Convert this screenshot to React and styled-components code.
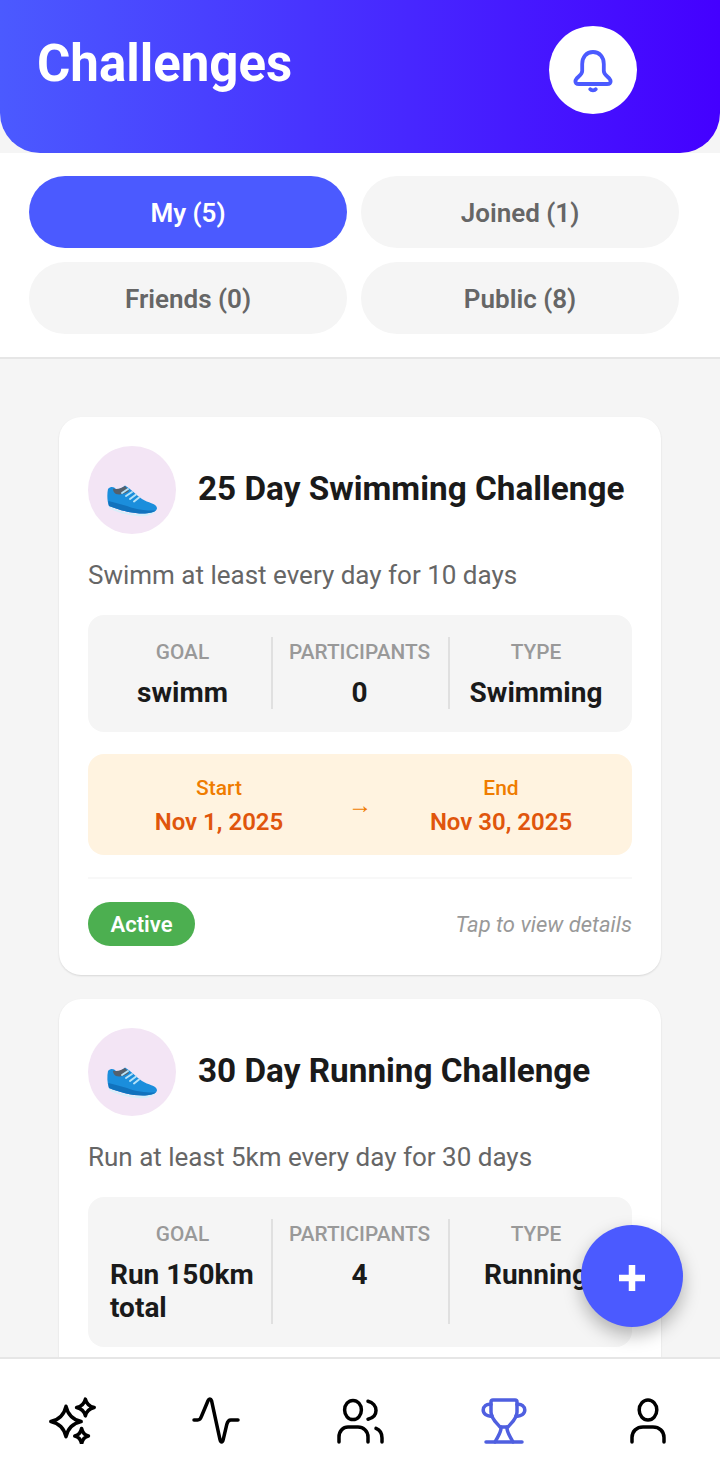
import React from 'react'
import styled, { createGlobalStyle } from 'styled-components'

const primary = '#4b5aff'

const GlobalStyle = createGlobalStyle`
    html, body {
        margin: 0;
        padding: 0;
        background: #f5f5f5;
    }
    * {
        box-sizing: border-box;
    }
    body {
        font-family: Roboto, "Liberation Sans", sans-serif;
    }
`

const Screen = styled.div`
    position: relative;
    width: 720px;
    height: 1463px;
    display: flex;
    flex-direction: column;
    overflow: hidden;
    background: #f5f5f5;
`

const Header = styled.header`
    flex: none;
    height: 153px;
    padding: 26px 83px 0 37px;
    display: flex;
    justify-content: space-between;
    align-items: flex-start;
    background: linear-gradient(90deg, #4b5aff 0%, #4400ff 100%);
    border-radius: 0 0 40px 40px;
`

const Title = styled.h1`
    margin: 9px 0 0;
    font-size: 51px;
    line-height: 58px;
    font-weight: 700;
    color: #fff;
`

const BellButton = styled.button`
    width: 88px;
    height: 88px;
    padding: 0;
    border: none;
    border-radius: 50%;
    background: #fff;
    display: flex;
    align-items: center;
    justify-content: center;
`

const Tabs = styled.div`
    flex: none;
    display: grid;
    grid-template-columns: 318px 318px;
    gap: 14px;
    padding: 23px 41px 23px 29px;
    background: #fff;
    border-bottom: 2px solid #e6e6e6;
`

const Tab = styled.button`
    height: 72px;
    padding: 2px 0 0;
    border: none;
    border-radius: 36px;
    font-family: inherit;
    font-size: 26px;
    font-weight: 600;
    background: ${p => (p.$active ? primary : '#f5f5f5')};
    color: ${p => (p.$active ? '#fff' : '#666')};
`

const List = styled.main`
    flex: 1;
    min-height: 0;
    overflow: hidden;
    padding: 58px 59px 0;
    display: flex;
    flex-direction: column;
    gap: 24px;
`

const Card = styled.article`
    flex: none;
    padding: 29px;
    background: #fff;
    border-radius: 22px;
    box-shadow: 0 1px 2px rgba(0, 0, 0, 0.12);
`

const CardHead = styled.div`
    display: flex;
    align-items: center;
    gap: 22px;
    margin-bottom: 23px;
`

const Avatar = styled.div`
    flex: none;
    width: 88px;
    height: 88px;
    border-radius: 50%;
    background: #f3e5f5;
    display: flex;
    align-items: center;
    justify-content: center;
`

const CardTitle = styled.h2`
    margin: 0 0 2px;
    font-size: 33.3px;
    line-height: 40px;
    font-weight: 700;
    color: #1a1a1a;
    white-space: nowrap;
`

const Description = styled.p`
    margin: 0 0 22px;
    font-size: 26px;
    line-height: 36px;
    color: #666;
`

const Stats = styled.div`
    display: grid;
    grid-template-columns: 185px 177px 182px;
    padding: 22px 0 23px;
    background: #f5f5f5;
    border-radius: 16px;
    margin-bottom: 22px;
`

const Stat = styled.div`
    display: flex;
    flex-direction: column;
    align-items: center;
    padding: 0 16px 0 22px;
    border-right: 2px solid #e0e0e0;

    &:nth-child(2) {
        padding: 0 2px 0 0;
    }

    &:last-child {
        padding: 0 18px 0 8px;
        border-right: none;
    }
`

const StatLabel = styled.span`
    font-size: 20.8px;
    line-height: 30px;
    font-weight: 500;
    color: #999;
    white-space: nowrap;
    margin-bottom: 9px;
`

const StatValue = styled.span`
    font-size: 28px;
    line-height: 33px;
    font-weight: 700;
    color: #1a1a1a;
`

const Dates = styled.div`
    display: flex;
    align-items: center;
    height: 101px;
    padding: 0 22px;
    background: #fff3e0;
    border-radius: 16px;
    margin-bottom: 22px;
`

const DateCol = styled.div`
    flex: 1;
    display: flex;
    flex-direction: column;
    align-items: center;
`

const DateLabel = styled.span`
    margin-top: 2px;
    font-size: 21px;
    line-height: 28px;
    font-weight: 500;
    color: #ef7c00;
`

const DateValue = styled.span`
    margin-top: 5px;
    font-size: 24px;
    line-height: 30px;
    font-weight: 600;
    color: #e0550c;
`

const Arrow = styled.span`
    flex: none;
    width: 64px;
    text-align: center;
    font-size: 24px;
    line-height: 28px;
    color: #ef7c00;
`

const CardFoot = styled.div`
    display: flex;
    align-items: center;
    justify-content: space-between;
    padding-top: 23px;
    border-top: 2px solid #f8f8f8;
`

const Badge = styled.span`
    width: 107px;
    height: 44px;
    border-radius: 22px;
    background: #4caf50;
    color: #fff;
    font-size: 22px;
    font-weight: 600;
    display: flex;
    align-items: center;
    justify-content: center;
`

const Hint = styled.span`
    font-size: 22px;
    font-style: italic;
    color: #999;
`

const Fab = styled.button`
    position: absolute;
    left: 581px;
    top: 1225px;
    width: 102px;
    height: 102px;
    padding: 4px 0 0;
    border: none;
    border-radius: 50%;
    background: ${primary};
    box-shadow: 0 8px 18px rgba(0, 0, 0, 0.28);
    display: flex;
    align-items: center;
    justify-content: center;
`

const Nav = styled.nav`
    position: relative;
    flex: none;
    height: 106px;
    display: grid;
    grid-template-columns: repeat(5, 1fr);
    align-items: start;
    padding-top: 37px;
    background: #fff;
    border-top: 2px solid #e6e6e6;
`

const NavItem = styled.div`
    display: flex;
    justify-content: center;
    color: ${p => (p.$active ? '#4f5fe0' : '#000')};
`

const Shoe = styled.svg`
    margin-top: 22px;
`

const star = (cx, cy, rx, ry) => {
    const k = 0.18
    return `M${cx} ${cy - ry}Q${cx + rx * k} ${cy - ry * k} ${cx + rx} ${cy}Q${cx + rx * k} ${cy + ry * k} ${cx} ${cy + ry}Q${cx - rx * k} ${cy + ry * k} ${cx - rx} ${cy}Q${cx - rx * k} ${cy - ry * k} ${cx} ${cy - ry}Z`
}

const Icon = ({ children }) => (
    <svg width="48" height="48" viewBox="0 0 24 24" fill="none" stroke="currentColor" strokeWidth="1.75" strokeLinecap="round" strokeLinejoin="round">
        {children}
    </svg>
)

const BellIcon = () => (
    <svg width="48" height="48" viewBox="0 0 24 24" fill="none" stroke={primary} strokeWidth="1.9" strokeLinecap="round" strokeLinejoin="round">
        <path d="M12 3C8.6 3 6.6 5.6 6.6 9V12.5C6.6 14.8 3.2 15.8 3.2 17.6C3.2 18.6 4 19 5 19H19C20 19 20.8 18.6 20.8 17.6C20.8 15.8 17.4 14.8 17.4 12.5V9C17.4 5.6 15.4 3 12 3Z" />
        <path d="M10.6 21.6C11.2 22.4 12.8 22.4 13.4 21.6" />
    </svg>
)

const ShoeIcon = () => (
    <Shoe width="50" height="32" viewBox="0 0 50 32">
        <path d="M2 21C10 26 22 29 33 29C40 29 46 28 48.5 25L48 27C44 31 36 32 30 31C20 30 8 27 2 23Z" fill="#d6eefa" />
        <path d="M1 4C4 1 7 2 9 4C12 5 15 3 18 0.5C24 4 29 10 35 14C41 18 49 18 50 23C50 26 46 28 38 28.5C26 29 12 25 2 21C0 16 0 9 1 4Z" fill="#1b8edc" />
        <path d="M2 21C12 25 26 29 38 28.5C43 28.2 47 27 49 25.5C42 26 30 25 20 21C14 19 8 18 1.4 16C1.5 18 1.7 20 2 21Z" fill="#1172bd" />
        <path d="M6 3.5C10 5 15 3 18 1L22 6C18 9 13 10 9 9C7 8 6 6 6 3.5Z" fill="#55606c" />
        <path d="M15 8L21 4M19 11L25 7M23 14L29 9.5M27 16.5L32 12.5" stroke="#b5e2f7" strokeWidth="2" strokeLinecap="round" />
    </Shoe>
)

const SparkleIcon = () => (
    <Icon>
        <path d={star(9, 12.75, 7.6, 7.6)} />
        <path d={star(18.7, 5.75, 4.4, 4.2)} />
        <path d={star(16.8, 20, 3.4, 3.8)} />
    </Icon>
)

const ActivityIcon = () => (
    <Icon>
        <path d="M1 12H2.8C3.8 12 4.4 11.2 4.8 10L8 2.4C8.5 1.2 9.4 1.2 9.8 2.4L14 21.8C14.4 23.4 15.2 23.4 15.6 21.8L17.4 14.2C17.8 12.6 18.4 12 19.4 12H23" />
    </Icon>
)

const UsersIcon = () => (
    <Icon>
        <ellipse cx="8.5" cy="7" rx="4.2" ry="4.8" />
        <path d="M1.5 23V20.5C1.5 17.5 3.6 15.5 6 15.5H11C13.6 15.5 16 17.5 16 20.5V23" />
        <path d="M16 2.6C18.4 3.2 20 5 20 7.2C20 9.5 18.4 11 16 11.6" />
        <path d="M20 16.2C22 17 23 19 23 21V23" />
    </Icon>
)

const TrophyIcon = () => (
    <Icon>
        <path d="M6.5 2H17.5C18 2 18.5 2.4 18.5 3V8C18.5 11.5 15.5 13.5 14 15.5H10C8.5 13.5 5.5 11.5 5.5 8V3C5.5 2.4 6 2 6.5 2Z" />
        <path d="M5.5 4.2C3.2 3.8 1.6 5.2 1.6 7C1.6 8.8 3.4 10.4 6 10" />
        <path d="M18.5 4.2C20.8 3.8 22.4 5.2 22.4 7C22.4 8.8 20.6 10.4 18 10" />
        <path d="M10.5 15.5C10.8 18 9 20 7.5 23M13.5 15.5C13.2 18 15 20 16.5 23" />
        <path d="M3 23H21" />
    </Icon>
)

const UserIcon = () => (
    <Icon>
        <ellipse cx="12" cy="7" rx="4.4" ry="5" />
        <path d="M4 23V20.8C4 17.6 6.4 15.5 9.5 15.5H14.5C17.6 15.5 20 17.6 20 20.8V23" />
    </Icon>
)

const tabs = [
    { label: 'My (5)', active: true },
    { label: 'Joined (1)' },
    { label: 'Friends (0)' },
    { label: 'Public (8)' },
]

const challenges = [
    {
        title: '25 Day Swimming Challenge',
        description: 'Swimm at least every day for 10 days',
        goal: 'swimm',
        participants: 0,
        type: 'Swimming',
        start: 'Nov 1, 2025',
        end: 'Nov 30, 2025',
        status: 'Active',
    },
    {
        title: '30 Day Running Challenge',
        description: 'Run at least 5km every day for 30 days',
        goal: 'Run 150km total',
        participants: 4,
        type: 'Running',
    },
]

const ChallengeCard = ({ title, description, goal, participants, type, start, end, status }) => (
    <Card>
        <CardHead>
            <Avatar><ShoeIcon /></Avatar>
            <CardTitle>{title}</CardTitle>
        </CardHead>
        <Description>{description}</Description>
        <Stats>
            <Stat>
                <StatLabel>GOAL</StatLabel>
                <StatValue>{goal}</StatValue>
            </Stat>
            <Stat>
                <StatLabel>PARTICIPANTS</StatLabel>
                <StatValue>{participants}</StatValue>
            </Stat>
            <Stat>
                <StatLabel>TYPE</StatLabel>
                <StatValue>{type}</StatValue>
            </Stat>
        </Stats>
        {start && (
            <Dates>
                <DateCol>
                    <DateLabel>Start</DateLabel>
                    <DateValue>{start}</DateValue>
                </DateCol>
                <Arrow>→</Arrow>
                <DateCol>
                    <DateLabel>End</DateLabel>
                    <DateValue>{end}</DateValue>
                </DateCol>
            </Dates>
        )}
        {status && (
            <CardFoot>
                <Badge>{status}</Badge>
                <Hint>Tap to view details</Hint>
            </CardFoot>
        )}
    </Card>
)

export default function App() {
    return (
        <Screen>
            <GlobalStyle />
            <Header>
                <Title>Challenges</Title>
                <BellButton><BellIcon /></BellButton>
            </Header>
            <Tabs>
                {tabs.map(t => (
                    <Tab key={t.label} $active={t.active}>{t.label}</Tab>
                ))}
            </Tabs>
            <List>
                {challenges.map(c => (
                    <ChallengeCard key={c.title} {...c} />
                ))}
            </List>
            <Nav>
                <NavItem><SparkleIcon /></NavItem>
                <NavItem><ActivityIcon /></NavItem>
                <NavItem><UsersIcon /></NavItem>
                <NavItem $active><TrophyIcon /></NavItem>
                <NavItem><UserIcon /></NavItem>
            </Nav>
            <Fab>
                <svg width="26" height="26" viewBox="0 0 26 26">
                    <path d="M13 0V26M0 13H26" stroke="#fff" strokeWidth="6.5" />
                </svg>
            </Fab>
        </Screen>
    )
}
